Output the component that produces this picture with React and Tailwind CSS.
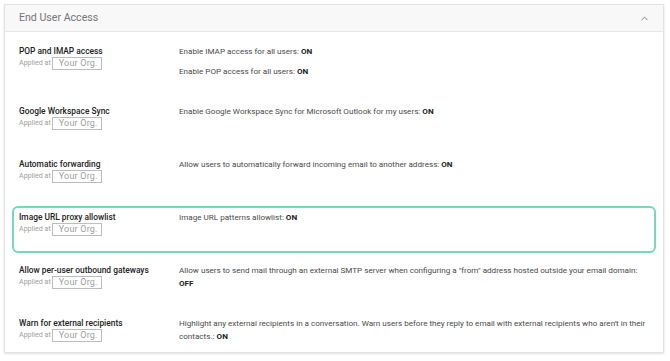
import { ChevronUp } from 'lucide-react';

const settings = [
  {
    title: 'POP and IMAP access',
    lines: [
      ['Enable IMAP access for all users: ', 'ON'],
      ['Enable POP access for all users: ', 'ON'],
    ],
  },
  {
    title: 'Google Workspace Sync',
    lines: [['Enable Google Workspace Sync for Microsoft Outlook for my users: ', 'ON']],
  },
  {
    title: 'Automatic forwarding',
    lines: [['Allow users to automatically forward incoming email to another address: ', 'ON']],
  },
  {
    title: 'Image URL proxy allowlist',
    lines: [['Image URL patterns allowlist: ', 'ON']],
    highlight: true,
  },
  {
    title: 'Allow per-user outbound gateways',
    lines: [
      [
        'Allow users to send mail through an external SMTP server when configuring a "from" address hosted outside your email domain: ',
        'OFF',
      ],
    ],
  },
  {
    title: 'Warn for external recipients',
    lines: [
      [
        "Highlight any external recipients in a conversation. Warn users before they reply to email with external recipients who aren't in their contacts.: ",
        'ON',
      ],
    ],
  },
];

function SettingRow({ setting, last }) {
  return (
    <div
      className={
        'flex rounded-[6px] border-2 pt-[3px] ' +
        (last ? 'pb-[8px] ' : 'pb-[15px] ') +
        (setting.highlight ? 'border-[#76d7bf]' : 'border-transparent')
      }
    >
      <div className="w-[165px] shrink-0 pl-[5px]">
        <div className="text-[8.4px] leading-[12px] font-medium text-[#222]">{setting.title}</div>
        <div className="flex items-center h-[13px]">
          <span className="text-[7.1px] text-[#a0a0a0]">Applied at</span>
          <span className="ml-[1px] h-[13px] w-[50px] border border-[#bdbdbd] text-[9px] leading-[11px] text-[#a0a0a0] pl-[6px] tracking-[0.2px]">
            Your Org.
          </span>
        </div>
      </div>
      <div className="flex-1 pr-[2px] flex flex-col gap-[7px]">
        {setting.lines.map(([text, value], i) => (
          <p key={i} className="text-[8.1px] leading-[12.5px] text-[#4a4a4a]">
            {text}
            <span className="font-bold text-[#222]">{value}</span>
          </p>
        ))}
      </div>
    </div>
  );
}

export default function App() {
  return (
    <div className="w-[670px] h-[361px] bg-white pt-[4px] pl-[4px]" style={{ fontFamily: 'Roboto, "Liberation Sans", sans-serif' }}>
      <div className="w-[660px] border border-[#e3e3e3] shadow-[0_1px_2px_rgba(0,0,0,0.12)] bg-white">
        <header className="h-[27px] bg-[#f8f8f8] border-b border-[#e6e6e6] flex items-center justify-between pl-[14px] pr-[13px]">
          <h1 className="text-[10.6px] text-[#757575]">End User Access</h1>
          <ChevronUp size={11} strokeWidth={2} className="text-[#777]" />
        </header>
        <div className="pt-[8px] px-[7px] flex flex-col gap-[6px]">
          {settings.map((s, i) => (
            <SettingRow key={s.title} setting={s} last={i === settings.length - 1} />
          ))}
        </div>
      </div>
    </div>
  );
}
